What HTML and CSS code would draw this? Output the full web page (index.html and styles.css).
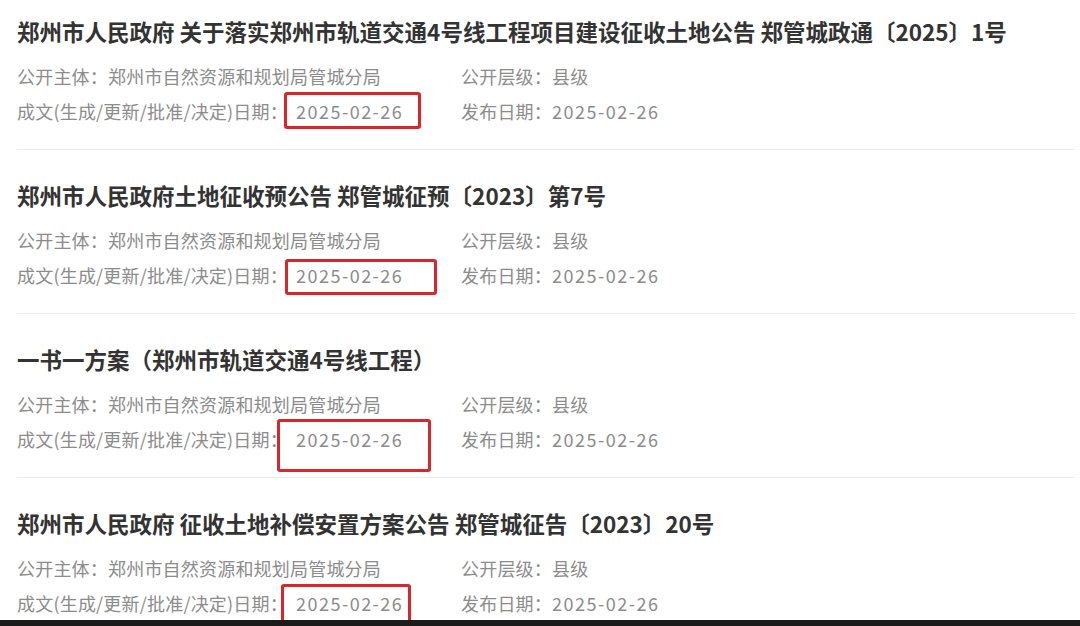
FILE: index.html
```html
<!DOCTYPE html>
<html>
<head>
    <meta charset="utf-8">
    <title>政府信息公开</title>
    <link rel="stylesheet" href="styles.css">
</head>
<body>
    <div class="page">
        <div class="list">
            <div class="item">
                <h2 class="title">郑州市人民政府 关于落实郑州市轨道交通4号线工程项目建设征收土地公告 郑管城政通〔2025〕1号</h2>
                <div class="meta">
                    <p>公开主体：郑州市自然资源和规划局管城分局</p>
                    <p>公开层级：县级</p>
                    <p>成文(生成/更新/批准/决定)日期：<span class="date made">2025-02-26<i class="mark mark-1"></i></span></p>
                    <p>发布日期：<span class="date">2025-02-26</span></p>
                </div>
            </div>

            <div class="item">
                <h2 class="title">郑州市人民政府土地征收预公告 郑管城征预〔2023〕第7号</h2>
                <div class="meta">
                    <p>公开主体：郑州市自然资源和规划局管城分局</p>
                    <p>公开层级：县级</p>
                    <p>成文(生成/更新/批准/决定)日期：<span class="date made">2025-02-26<i class="mark mark-2"></i></span></p>
                    <p>发布日期：<span class="date">2025-02-26</span></p>
                </div>
            </div>

            <div class="item">
                <h2 class="title">一书一方案（郑州市轨道交通4号线工程）</h2>
                <div class="meta">
                    <p>公开主体：郑州市自然资源和规划局管城分局</p>
                    <p>公开层级：县级</p>
                    <p>成文(生成/更新/批准/决定)日期：<span class="date made">2025-02-26<i class="mark mark-3"></i></span></p>
                    <p>发布日期：<span class="date">2025-02-26</span></p>
                </div>
            </div>

            <div class="item">
                <h2 class="title">郑州市人民政府 征收土地补偿安置方案公告 郑管城征告〔2023〕20号</h2>
                <div class="meta">
                    <p>公开主体：郑州市自然资源和规划局管城分局</p>
                    <p>公开层级：县级</p>
                    <p>成文(生成/更新/批准/决定)日期：<span class="date made">2025-02-26<i class="mark mark-4"></i></span></p>
                    <p>发布日期：<span class="date">2025-02-26</span></p>
                </div>
            </div>
        </div>
        <div class="bottom-bar"></div>
    </div>
</body>
</html>
```

FILE: styles.css
```css
html, body {
    margin: 0;
    padding: 0;
    background: #fff;
}
body {
    font-family: "Noto Sans CJK SC", "Noto Sans", sans-serif;
    color: #333;
}
.page {
    height: 100vh;
    display: flex;
    flex-direction: column;
    overflow: hidden;
}
.list {
    flex: 1;
    overflow: hidden;
    padding: 0 5px 0 17px;
}
.item {
    padding: 30px 0 20px;
    border-bottom: 1px solid #ececec;
}
.item:first-child {
    padding-top: 16px;
}
.title {
    margin: 0 0 13px;
    font-size: 22.5px;
    line-height: 30px;
    font-weight: bold;
    color: #333;
    white-space: nowrap;
}
.meta {
    display: grid;
    grid-template-columns: 444px 1fr;
}
.meta p {
    margin: 0;
    font-size: 18px;
    line-height: 35px;
    color: #8c8c8c;
    white-space: nowrap;
    letter-spacing: 0.2px;
}
.date {
    position: relative;
    display: inline-block;
    letter-spacing: 1.5px;
}
.date.made {
    margin-left: 8px;
}
/* red annotation boxes drawn over the dates */
.mark {
    position: absolute;
    border: 3px solid #d8262b;
    border-radius: 3px;
}
.mark-1 {
    left: -12px;
    right: -18px;
    top: -2px;
    bottom: 0;
}
.mark-2 {
    left: -11px;
    right: -34px;
    top: 1px;
    bottom: -2px;
}
.mark-3 {
    left: -19px;
    right: -28px;
    top: -3px;
    bottom: -15px;
}
.mark-4 {
    left: -15px;
    right: -8px;
    top: -2px;
    bottom: -2px;
}
.bottom-bar {
    height: 6px;
    background: #1b1b1b;
}
```
